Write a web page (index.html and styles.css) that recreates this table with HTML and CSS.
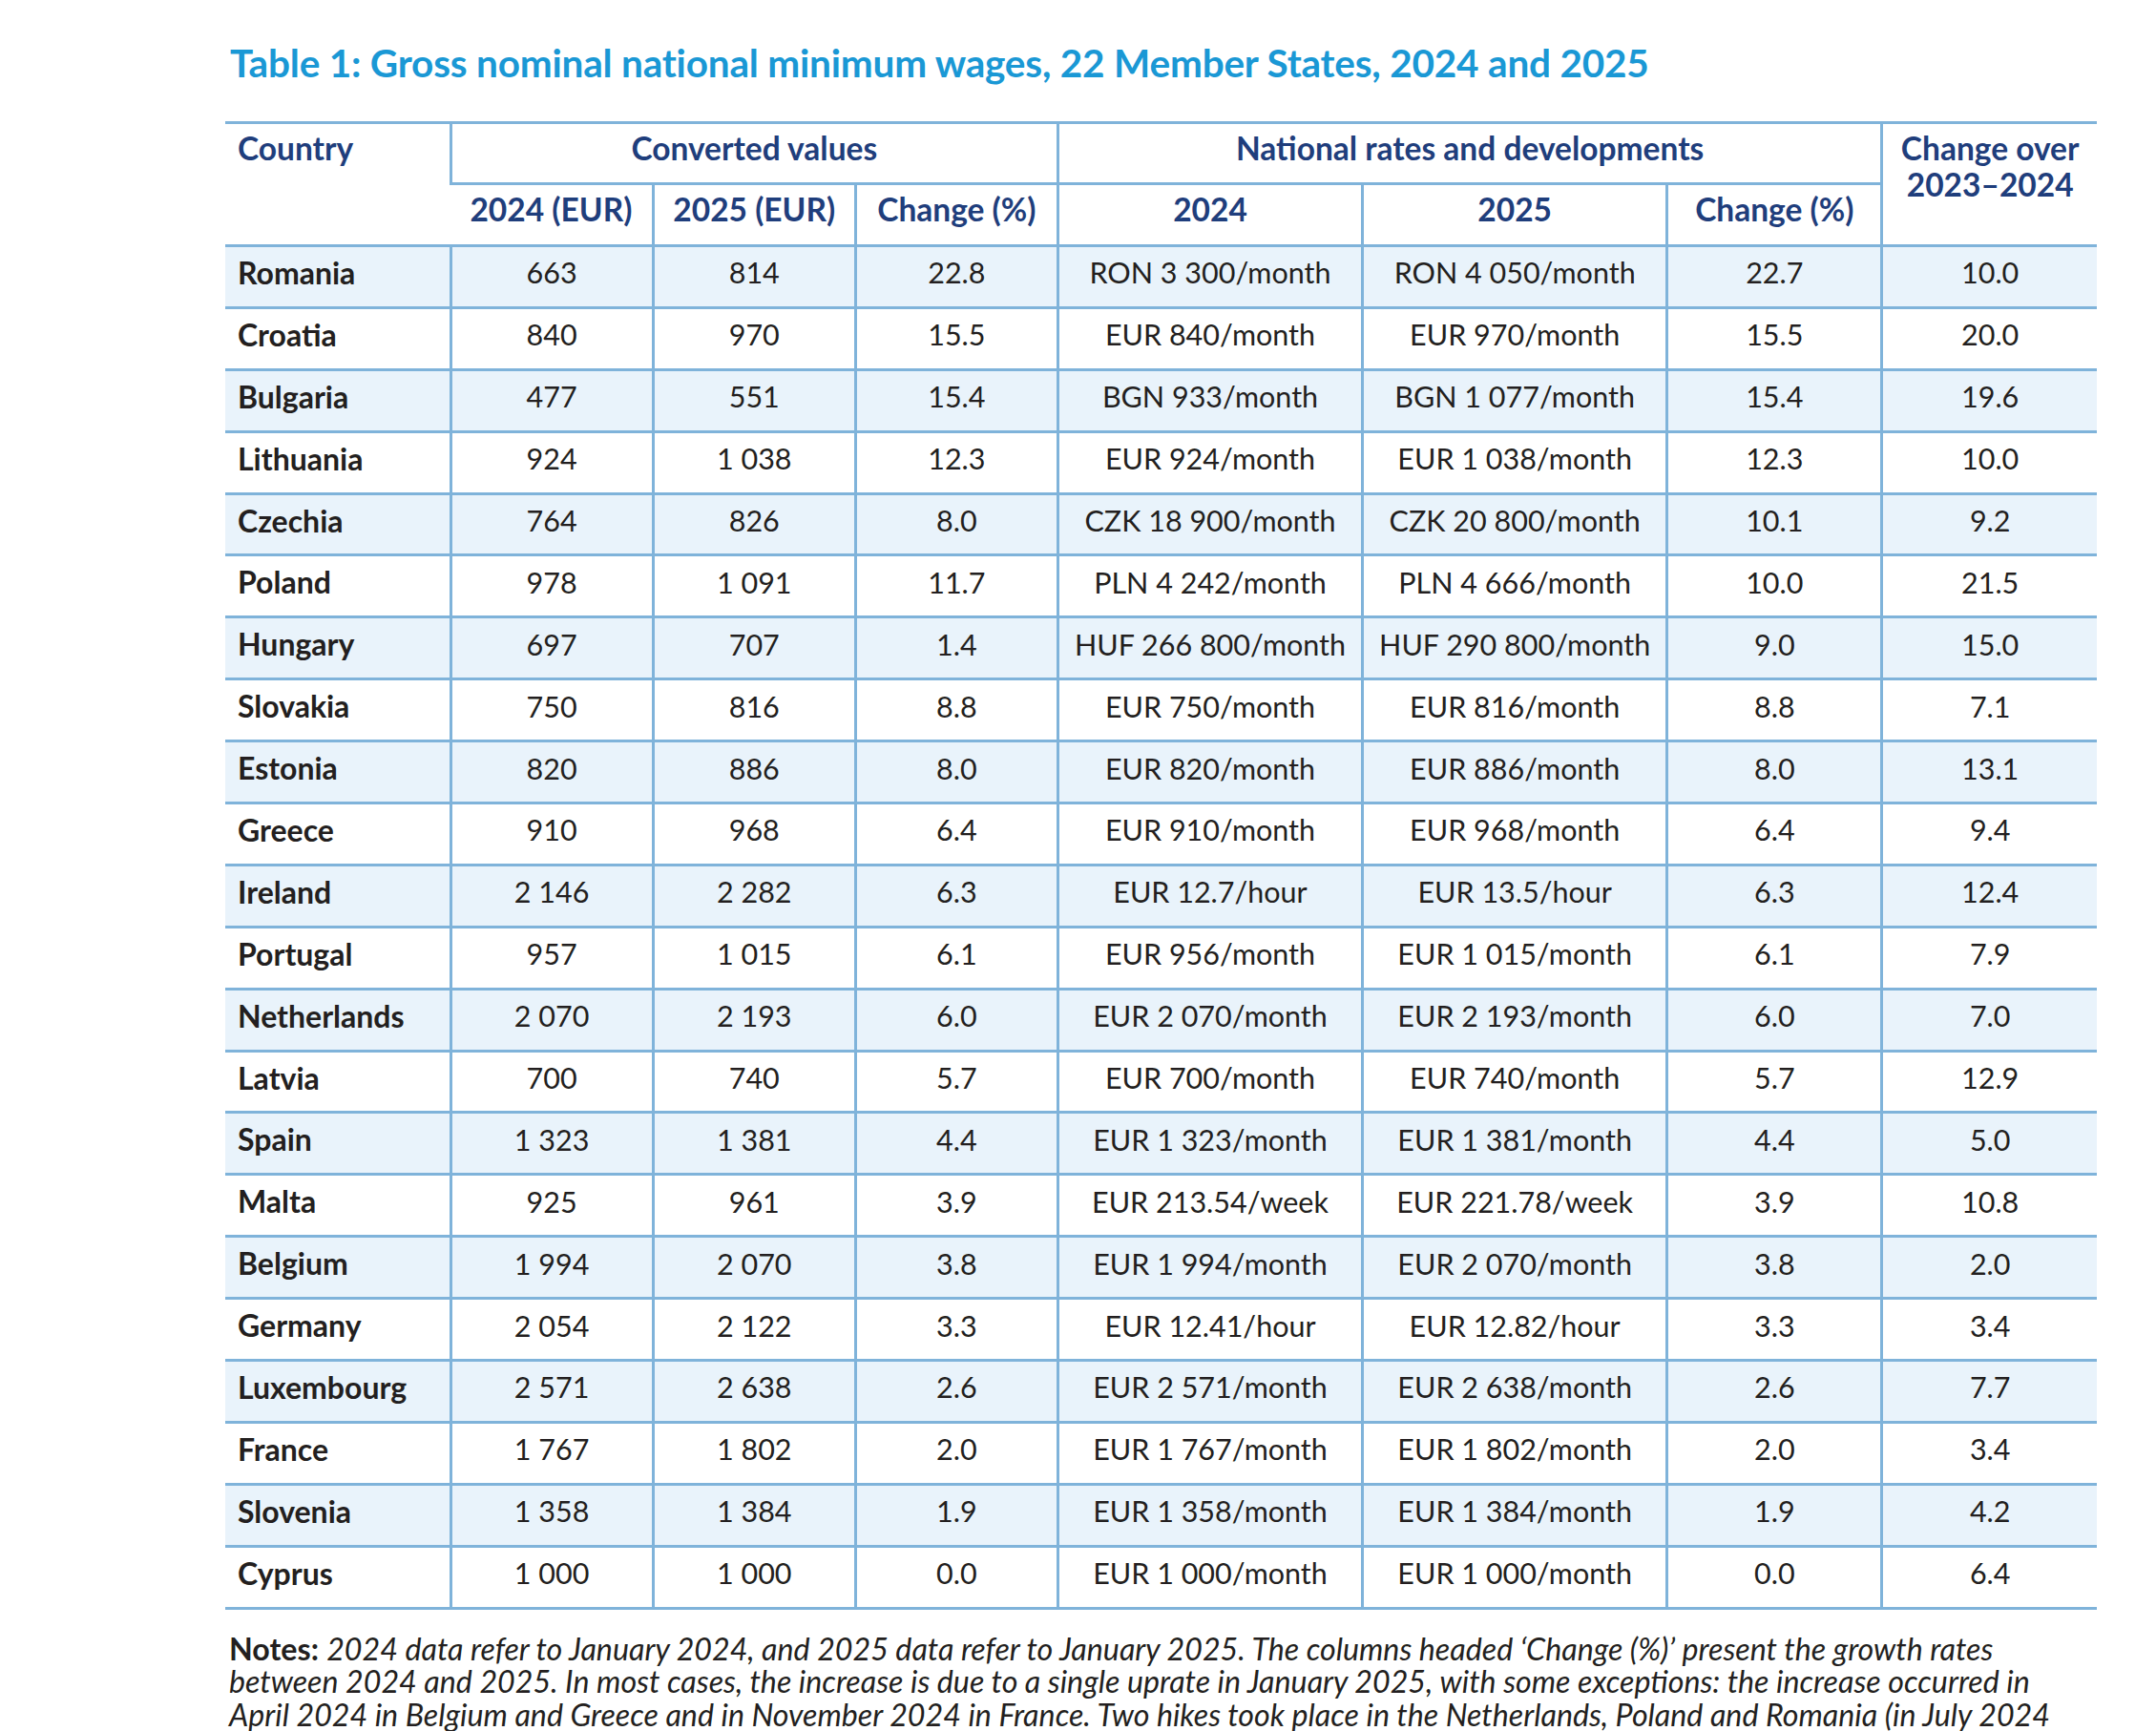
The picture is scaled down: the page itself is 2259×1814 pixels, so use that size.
FILE: index.html
```html
<!DOCTYPE html>
<html lang="en">
<head>
<meta charset="utf-8">
<title>Table 1</title>
<link rel="stylesheet" href="styles.css">
</head>
<body>
<div class="page">
  <h1 class="title">Table 1: Gross nominal national minimum wages, 22 Member States, 2024 and 2025</h1>
  <table class="wages">
    <colgroup>
      <col class="c-country"><col class="c-eur"><col class="c-eur"><col class="c-eur">
      <col class="c-nat"><col class="c-nat"><col class="c-chg"><col class="c-chg">
    </colgroup>
    <thead>
      <tr class="h1">
        <th class="country" rowspan="2">Country</th>
        <th colspan="3" class="grp">Converted values</th>
        <th colspan="3" class="grp">National rates and developments</th>
        <th rowspan="2" class="over">Change over<br>2023–2024</th>
      </tr>
      <tr class="h2">
        <th>2024 (EUR)</th><th>2025 (EUR)</th><th>Change (%)</th>
        <th>2024</th><th>2025</th><th>Change (%)</th>
      </tr>
    </thead>
    <tbody>
      <tr><td class="country">Romania</td><td>663</td><td>814</td><td>22.8</td><td>RON 3&nbsp;300/month</td><td>RON 4&nbsp;050/month</td><td>22.7</td><td>10.0</td></tr>
      <tr><td class="country">Croatia</td><td>840</td><td>970</td><td>15.5</td><td>EUR 840/month</td><td>EUR 970/month</td><td>15.5</td><td>20.0</td></tr>
      <tr><td class="country">Bulgaria</td><td>477</td><td>551</td><td>15.4</td><td>BGN 933/month</td><td>BGN 1&nbsp;077/month</td><td>15.4</td><td>19.6</td></tr>
      <tr><td class="country">Lithuania</td><td>924</td><td>1&nbsp;038</td><td>12.3</td><td>EUR 924/month</td><td>EUR 1&nbsp;038/month</td><td>12.3</td><td>10.0</td></tr>
      <tr><td class="country">Czechia</td><td>764</td><td>826</td><td>8.0</td><td>CZK 18&nbsp;900/month</td><td>CZK 20&nbsp;800/month</td><td>10.1</td><td>9.2</td></tr>
      <tr><td class="country">Poland</td><td>978</td><td>1&nbsp;091</td><td>11.7</td><td>PLN 4&nbsp;242/month</td><td>PLN 4&nbsp;666/month</td><td>10.0</td><td>21.5</td></tr>
      <tr><td class="country">Hungary</td><td>697</td><td>707</td><td>1.4</td><td>HUF 266&nbsp;800/month</td><td>HUF 290&nbsp;800/month</td><td>9.0</td><td>15.0</td></tr>
      <tr><td class="country">Slovakia</td><td>750</td><td>816</td><td>8.8</td><td>EUR 750/month</td><td>EUR 816/month</td><td>8.8</td><td>7.1</td></tr>
      <tr><td class="country">Estonia</td><td>820</td><td>886</td><td>8.0</td><td>EUR 820/month</td><td>EUR 886/month</td><td>8.0</td><td>13.1</td></tr>
      <tr><td class="country">Greece</td><td>910</td><td>968</td><td>6.4</td><td>EUR 910/month</td><td>EUR 968/month</td><td>6.4</td><td>9.4</td></tr>
      <tr><td class="country">Ireland</td><td>2&nbsp;146</td><td>2&nbsp;282</td><td>6.3</td><td>EUR 12.7/hour</td><td>EUR 13.5/hour</td><td>6.3</td><td>12.4</td></tr>
      <tr><td class="country">Portugal</td><td>957</td><td>1&nbsp;015</td><td>6.1</td><td>EUR 956/month</td><td>EUR 1&nbsp;015/month</td><td>6.1</td><td>7.9</td></tr>
      <tr><td class="country">Netherlands</td><td>2&nbsp;070</td><td>2&nbsp;193</td><td>6.0</td><td>EUR 2&nbsp;070/month</td><td>EUR 2&nbsp;193/month</td><td>6.0</td><td>7.0</td></tr>
      <tr><td class="country">Latvia</td><td>700</td><td>740</td><td>5.7</td><td>EUR 700/month</td><td>EUR 740/month</td><td>5.7</td><td>12.9</td></tr>
      <tr><td class="country">Spain</td><td>1&nbsp;323</td><td>1&nbsp;381</td><td>4.4</td><td>EUR 1&nbsp;323/month</td><td>EUR 1&nbsp;381/month</td><td>4.4</td><td>5.0</td></tr>
      <tr><td class="country">Malta</td><td>925</td><td>961</td><td>3.9</td><td>EUR 213.54/week</td><td>EUR 221.78/week</td><td>3.9</td><td>10.8</td></tr>
      <tr><td class="country">Belgium</td><td>1&nbsp;994</td><td>2&nbsp;070</td><td>3.8</td><td>EUR 1&nbsp;994/month</td><td>EUR 2&nbsp;070/month</td><td>3.8</td><td>2.0</td></tr>
      <tr><td class="country">Germany</td><td>2&nbsp;054</td><td>2&nbsp;122</td><td>3.3</td><td>EUR 12.41/hour</td><td>EUR 12.82/hour</td><td>3.3</td><td>3.4</td></tr>
      <tr><td class="country">Luxembourg</td><td>2&nbsp;571</td><td>2&nbsp;638</td><td>2.6</td><td>EUR 2&nbsp;571/month</td><td>EUR 2&nbsp;638/month</td><td>2.6</td><td>7.7</td></tr>
      <tr><td class="country">France</td><td>1&nbsp;767</td><td>1&nbsp;802</td><td>2.0</td><td>EUR 1&nbsp;767/month</td><td>EUR 1&nbsp;802/month</td><td>2.0</td><td>3.4</td></tr>
      <tr><td class="country">Slovenia</td><td>1&nbsp;358</td><td>1&nbsp;384</td><td>1.9</td><td>EUR 1&nbsp;358/month</td><td>EUR 1&nbsp;384/month</td><td>1.9</td><td>4.2</td></tr>
      <tr><td class="country">Cyprus</td><td>1&nbsp;000</td><td>1&nbsp;000</td><td>0.0</td><td>EUR 1&nbsp;000/month</td><td>EUR 1&nbsp;000/month</td><td>0.0</td><td>6.4</td></tr>
    </tbody>
  </table>
  <p class="notes"><strong>Notes:</strong> <em>2024 data refer to January 2024, and 2025 data refer to January 2025. The columns headed ‘Change (%)’ present the growth rates<br>between 2024 and 2025. In most cases, the increase is due to a single uprate in January 2025, with some exceptions: the increase occurred in<br>April 2024 in Belgium and Greece and in November 2024 in France. Two hikes took place in the Netherlands, Poland and Romania (in July 2024<br>and January 2025).</em></p>
</div>
</body>
</html>
```
FILE: styles.css
```css
html, body {
  margin: 0;
  padding: 0;
  background: #ffffff;
}

body {
  font-family: Lato, "Liberation Sans", sans-serif;
  color: #231f20;
}

.page {
  padding: 44px 0 0 236px;
}

.title {
  margin: 0 0 0 5px;
  font-size: 40.5px;
  line-height: 44px;
  font-weight: 700;
  color: #1a98d5;
  letter-spacing: -0.2px;
}

.wages {
  margin-top: 39px;
  width: 1961px;
  table-layout: fixed;
  border-collapse: collapse;
  font-size: 30.5px;
}

.c-country { width: 236px; }
.c-eur { width: 212px; }
.c-nat { width: 319px; }
.c-chg { width: 225px; }

.wages th,
.wages td {
  padding: 0 8px 9px;
  text-align: center;
  vertical-align: middle;
  border-left: 3px solid #7fb3da;
  white-space: nowrap;
}

.wages th:first-child,
.wages td:first-child {
  border-left: none;
}

.wages thead th {
  color: #1f3e7c;
  font-weight: 700;
  font-size: 33.5px;
  padding-bottom: 12px;
}

.wages thead tr.h1 {
  border-top: 3px solid #7fb3da;
  height: 64px;
}

.wages thead tr.h1 th.grp {
  border-bottom: 3px solid #7fb3da;
}

.wages thead tr.h2 {
  height: 65px;
}

.wages thead th.country {
  text-align: left;
  vertical-align: top;
  padding: 6px 0 0 13px;
  line-height: 38px;
}

.wages thead th.over {
  vertical-align: top;
  padding-top: 6px;
  padding-bottom: 0;
  line-height: 38px;
}

.wages tbody tr {
  height: 64.9px;
  border-top: 3px solid #7fb3da;
}

.wages tbody tr:last-child {
  border-bottom: 3px solid #7fb3da;
}

.wages tbody tr:nth-child(odd) {
  background: #e9f3fb;
}

.wages td.country {
  text-align: left;
  padding-left: 13px;
  font-weight: 700;
  font-size: 32px;
}

.notes {
  margin: 24px 0 0 4px;
  font-size: 32.2px;
  line-height: 34.6px;
  white-space: nowrap;
  color: #231f20;
}

.notes strong {
  font-weight: 700;
}

.notes em {
  font-style: italic;
}
```
